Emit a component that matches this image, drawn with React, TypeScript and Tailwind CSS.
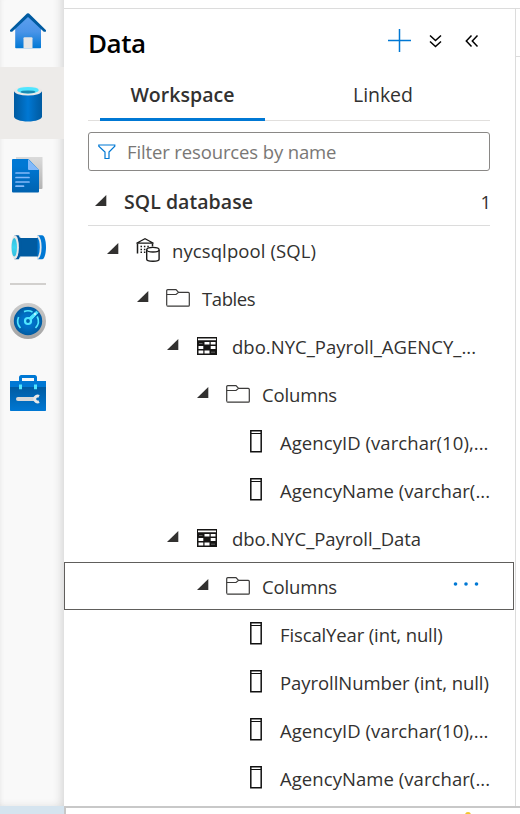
import React from "react";

const Caret = ({ className = "" }: { className?: string }) => (
  <svg viewBox="0 0 12 12" className={`h-3 w-3 shrink-0 ${className}`} aria-hidden="true">
    <path d="M11.3 0V11H0Z" fill="#323130" />
  </svg>
);

const HomeIcon = () => (
  <svg viewBox="0 0 36 36" width="36" height="36">
    <defs>
      <linearGradient id="home" x1="0" y1="0" x2="0" y2="1">
        <stop offset="0" stopColor="#5ea0ef" />
        <stop offset="0.5" stopColor="#4a94e8" />
        <stop offset="1" stopColor="#0078d4" />
      </linearGradient>
    </defs>
    <path d="M18 2 31 15V34.5a.8.8 0 0 1-.8.8H6a.8.8 0 0 1-.8-.8V15Z" fill="url(#home)" />
    <path d="M.7 18.7a1 1 0 0 1-.6-1.7L17 .6q1-.9 2 0L35.800 17a1 1 0 0 1-.6 1.700H33.800L18 4 2.200 18.700Z" fill="#005ba1" />
    <path d="M13.500 25.300a1 1 0 0 1 1-1h7a1 1 0 0 1 1 1v10h-9Z" fill="#e6e6e6" />
  </svg>
);

const DatabaseIcon = () => (
  <svg viewBox="0 0 28 36" width="28" height="36">
    <defs>
      <linearGradient id="dbody">
        <stop offset="0" stopColor="#005ba1" />
        <stop offset="0.2" stopColor="#0065b3" />
        <stop offset="0.5" stopColor="#0078d4" />
        <stop offset="0.8" stopColor="#0065b3" />
        <stop offset="1" stopColor="#005ba1" />
      </linearGradient>
    </defs>
    <path d="M0 5h28v25.500c0 2.700-6.300 5-14 5S0 33.200 0 30.500Z" fill="url(#dbody)" />
    <ellipse cx="14" cy="4.800" rx="14" ry="4.800" fill="#e8e8e8" />
    <ellipse cx="14" cy="4.200" rx="10.800" ry="3.300" fill="#50e6ff" />
    <ellipse cx="14" cy="5.900" rx="7.500" ry="1.500" fill="#198ab3" />
  </svg>
);

const DocumentIcon = () => (
  <svg viewBox="0 0 32 36" width="32" height="36">
    <defs>
      <linearGradient id="page" x1="0" y1="0" x2="0" y2="1">
        <stop offset="0" stopColor="#0078d4" />
        <stop offset="0.2" stopColor="#0078d4" />
        <stop offset="1" stopColor="#0062b0" />
      </linearGradient>
      <linearGradient id="sheet" x1="0" y1="0" x2="0" y2="1">
        <stop offset="0" stopColor="#dcdcdc" />
        <stop offset="1" stopColor="#b3b3b3" />
      </linearGradient>
    </defs>
    <rect x="4" y="-1" width="26.500" height="33" rx="1" fill="url(#sheet)" />
    <path d="M1 2h15.500L27 13v21.500a1 1 0 0 1-1 1H1a1 1 0 0 1-1-1V3a1 1 0 0 1 1-1Z" fill="url(#page)" />
    <path d="M16 2 27 13H17a1 1 0 0 1-1-1Z" fill="#83b9f9" />
    <path d="M4 16h13M4 20.500h13M4 25h13M4 29.200h7.500" stroke="#83b9f9" strokeWidth="1.700" strokeLinecap="round" />
  </svg>
);

const PipelineIcon = () => (
  <svg viewBox="0 0 36 25" width="36" height="25">
    <defs>
      <linearGradient id="pipeEnd" x1="0" y1="0" x2="0" y2="1">
        <stop offset="0" stopColor="#32bedd" />
        <stop offset="0.5" stopColor="#3fd5f0" />
        <stop offset="1" stopColor="#32bedd" />
      </linearGradient>
    </defs>
    <path d="M7 3h22v18.500H7Z" fill="#005ba1" />
    <path d="M4.500.3h4.300c1.200 1.200 2 2.900 2.600 5v14c-.6 2.200-1.400 3.900-2.600 5H4.500Z" fill="#005ba1" />
    <path d="M9 .3c1.700 2.500 2.700 6.500 2.700 12S10.700 21.800 9 24.300" fill="none" stroke="#dcecf8" strokeWidth=".8" strokeDasharray="3 18.500 4" />
    <path d="M27.500.3H32c2.700 0 4 6.500 4 12s-1.300 12-4 12h-4.500Z" fill="#0078d4" />
    <path d="M27.300.8C29.800 3 30.700 7.500 30.700 12.300s-.9 9.300-3.400 11.500" fill="none" stroke="#e8e8e8" strokeWidth="1.800" />
    <ellipse cx="5" cy="12.300" rx="3.900" ry="12" fill="#e8e8e8" />
    <ellipse cx="4.300" cy="12.300" rx="2.700" ry="9.300" fill="url(#pipeEnd)" />
  </svg>
);

const GaugeIcon = () => (
  <svg viewBox="0 0 36 36" width="36" height="36">
    <defs>
      <linearGradient id="rim" x1="0" y1="0" x2="0" y2="1">
        <stop offset="0" stopColor="#cccccc" />
        <stop offset="1" stopColor="#a2a2a2" />
      </linearGradient>
      <radialGradient id="dial">
        <stop offset="0" stopColor="#0078d4" />
        <stop offset="0.5" stopColor="#006fc4" />
        <stop offset="1" stopColor="#005ba1" />
      </radialGradient>
    </defs>
    <circle cx="18" cy="18" r="18" fill="url(#rim)" />
    <circle cx="18" cy="18" r="14.200" fill="url(#dial)" />
    <path d="M10.500 25A10.200 10.200 0 0 1 8.600 14M14 8.600A10.200 10.200 0 0 1 22.500 8.900M27.200 13.500A10.200 10.200 0 0 1 25.500 25" fill="none" stroke="#50e6ff" strokeWidth="1.700" />
    <path d="m19 15 7.500-6.800 1.500 1.500L21.200 17Z" fill="#50e6ff" stroke="#50e6ff" strokeLinejoin="round" />
    <circle cx="18" cy="18" r="3" fill="#0063af" stroke="#50e6ff" strokeWidth="2.200" />
    <circle cx="25" cy="11" r="1.200" fill="#b8f5ff" />
  </svg>
);

const ToolboxIcon = () => (
  <svg viewBox="0 0 36 36" width="36" height="36">
    <defs>
      <linearGradient id="box" x1="0" y1="0" x2="0" y2="1">
        <stop offset="0" stopColor="#005ba1" />
        <stop offset="1" stopColor="#0078d4" />
      </linearGradient>
    </defs>
    <path d="M10.500 7V2.200a.7.700 0 0 1 .7-.7h13.600a.7.700 0 0 1 .7.700V7" fill="none" stroke="#0078d4" strokeWidth="3" />
    <path d="M0 6h36v6H0Z" fill="#0078d4" />
    <path d="M0 12h36v23.300a.7.700 0 0 1-.7.700H.7a.7.700 0 0 1-.7-.7Z" fill="url(#box)" />
    <path d="M9 9.500h3v4.800H9ZM24 9.500h3v4.800h-3Z" fill="#50e6ff" />
    <path d="M8 24h16" stroke="#d8d8d8" strokeWidth="4" strokeLinecap="round" />
    <path d="M29 21.300A3 3 0 1 0 29 26.700" fill="none" stroke="#e8e8e8" strokeWidth="3" />
  </svg>
);

const PoolIcon = () => (
  <svg viewBox="0 0 24 24" width="24" height="24" fill="none" stroke="#1b1a19">
    <path d="M.5 5.200 9 .8l8.500 4.400Z" strokeWidth="1.200" />
    <path d="M1.500 5.500V15.500M16.500 5.500v3" strokeWidth="1.500" />
    <path d="M4.500 8.500h9M4.500 11.500h5M4.500 14.200h5" strokeWidth="1.600" strokeDasharray="1.500 1.900" />
    <path d="M10.700 12v9.200c0 1.300 2.800 2.100 6.200 2.100s6.200-.8 6.200-2.100V12" strokeWidth="1.400" fill="white" />
    <ellipse cx="16.900" cy="11.700" rx="6.200" ry="2.300" strokeWidth="1.400" fill="white" />
  </svg>
);

const FolderIcon = () => (
  <svg viewBox="0 0 24 18" width="24" height="18" fill="none" stroke="#3b3a39" strokeWidth="1.200">
    <path d="M.7 16V1.700a1 1 0 0 1 1-1H10l2.600 2.700H22.300a1 1 0 0 1 1 1V16.200a1 1 0 0 1-1 1H1.700a1 1 0 0 1-1-1" />
    <path d="M.7 5.500H10l2.600-2.100" />
  </svg>
);

const TableIcon = () => (
  <svg viewBox="0 0 20 18" width="20" height="18">
    <path d="M0 0h20v18H0Z" fill="#161514" />
    <path d="M1 1.500h18v1.700H1ZM7.500 5h5v2.500h-5ZM13.700 5H18.500v2.500h-4.800ZM1.500 9h4.800v3H1.500ZM13.700 9h4.800v3h-4.800ZM1.500 13.600h4.800v3H1.500ZM7.500 13.600h5v3h-5Z" fill="white" />
    <path d="M2 6.500h3.500M14 15.200h4" stroke="#777" strokeWidth=".8" />
  </svg>
);

const ColumnIcon = () => (
  <svg viewBox="0 0 12 23" width="12" height="23" fill="none" stroke="#111">
    <path d="M.8.8h10.400v21H.8Z" strokeWidth="1.500" />
    <path d="M1 3.500h10" strokeWidth="1" />
  </svg>
);

const iconOf = { pool: PoolIcon, folder: FolderIcon, table: TableIcon, column: ColumnIcon };

type Row = { label: string; kind: keyof typeof iconOf; pad: string; icon: string; text: string; selected?: boolean };

const rows: Row[] = [
  { label: "nycsqlpool (SQL)", kind: "pool", pad: "pl-[42px]", icon: "ml-[17px] w-9", text: "tracking-[0.1px]" },
  { label: "Tables", kind: "folder", pad: "pl-[72px]", icon: "ml-[17px] w-9", text: "tracking-[-0.4px]" },
  { label: "dbo.NYC_Payroll_AGENCY_...", kind: "table", pad: "pl-[102px]", icon: "ml-[18px] w-[35px]", text: "tracking-[0.02px]" },
  { label: "Columns", kind: "folder", pad: "pl-[132px]", icon: "ml-[17px] w-9", text: "tracking-[-0.15px]" },
  { label: "AgencyID (varchar(10),...", kind: "column", pad: "pl-[185px]", icon: "w-[30px]", text: "tracking-[0.06px]" },
  { label: "AgencyName (varchar(...", kind: "column", pad: "pl-[185px]", icon: "w-[30px]", text: "tracking-[0.06px]" },
  { label: "dbo.NYC_Payroll_Data", kind: "table", pad: "pl-[102px]", icon: "ml-[18px] w-[35px]", text: "tracking-[-0.05px]" },
  { label: "Columns", kind: "folder", pad: "pl-[132px]", icon: "ml-[17px] w-9", text: "tracking-[-0.15px]", selected: true },
  { label: "FiscalYear (int, null)", kind: "column", pad: "pl-[185px]", icon: "w-[30px]", text: "tracking-[-0.13px]" },
  { label: "PayrollNumber (int, null)", kind: "column", pad: "pl-[185px]", icon: "w-[30px]", text: "tracking-[-0.06px]" },
  { label: "AgencyID (varchar(10),...", kind: "column", pad: "pl-[185px]", icon: "w-[30px]", text: "tracking-[0.06px]" },
  { label: "AgencyName (varchar(...", kind: "column", pad: "pl-[185px]", icon: "w-[30px]", text: "tracking-[0.06px]" },
];

const TreeRow = ({ row }: { row: Row }) => {
  const Icon = iconOf[row.kind];
  return (
    <div className={`flex h-12 w-[450px] shrink-0 items-center border ${row.selected ? "border-[#605e5c]" : "border-transparent"} ${row.pad}`}>
      {row.kind !== "column" && <Caret className="-mt-0.5" />}
      <span className={`flex shrink-0 ${row.icon} ${row.kind === "column" ? "-mt-0.5" : ""}`}><Icon /></span>
      <span className={`pt-0.5 whitespace-nowrap ${row.text}`}>{row.label}</span>
      {row.selected && (
        <svg viewBox="0 0 26 4" width="26" height="4" className="mr-[34px] -mt-1 ml-auto" fill="#0078d4">
          <circle cx="2.500" cy="2" r="1.800" /><circle cx="13" cy="2" r="1.800" /><circle cx="23.500" cy="2" r="1.800" />
        </svg>
      )}
    </div>
  );
};

export default function App() {
  return (
    <div className="flex h-[814px] w-[520px] flex-col overflow-hidden bg-white font-['Open_Sans','Noto_Sans',sans-serif] text-[18.500px] leading-6 text-[#323130]">
      <div className="flex h-[806px] shrink-0">
        <nav className="flex w-16 shrink-0 flex-col bg-[#f9f9f9] shadow-[inset_-10px_-6px_10px_-8px_#d2d2d2,inset_4px_0_5px_-4px_#e4e4e4]">
          <div className="h-[67px] pt-[13px] pl-2.5"><HomeIcon /></div>
          <div className="h-[72px] bg-[#edebe9] pt-[19px] pl-3.5"><DatabaseIcon /></div>
          <div className="h-[72px] pt-[18px] pl-3"><DocumentIcon /></div>
          <div className="h-[72px] pt-6 pl-2.5"><PipelineIcon /></div>
          <div className="ml-2.5 h-0.5 w-9 bg-[#d2d0ce]" />
          <div className="h-[72px] pt-[18px] pl-2.5"><GaugeIcon /></div>
          <div className="h-[72px] pt-[18px] pl-2.5"><ToolboxIcon /></div>
        </nav>
        <div className="flex grow flex-col pt-2">
          <div className="flex grow border-t border-[#dcdcdc]">
            <main className="flex w-[452px] shrink-0 flex-col border-r border-[#dcdcdc]">
              <header className="flex h-[66px] items-center pl-6">
                <h1 className="w-[300px] pt-0.5 text-[26px] font-semibold leading-8 tracking-[-0.5px] text-black">Data</h1>
                <svg viewBox="0 0 23 23" width="23" height="23" className="mb-1"><path d="M11.500 0v23M0 11.500h23" stroke="#0078d4" strokeWidth="1.500" /></svg>
                <svg viewBox="0 0 14 14" width="14" height="14" className="ml-[18px] mb-0.5" fill="none" stroke="black" strokeWidth="1.500"><path d="m1 1.500 5.500 5L12 1.500M1 7.500l5.500 5 5.500-5" /></svg>
                <svg viewBox="0 0 14 14" width="14" height="14" className="ml-[22px] mb-0.5" fill="none" stroke="black" strokeWidth="1.500"><path d="M6.500 1.500 1.300 7l5.200 5.500M12.500 1.500 7.300 7l5.200 5.500" /></svg>
              </header>
              <div className="ml-6 flex h-[46px] w-[402px] items-end border-b border-[#e1dfdd]">
                <div className="-mb-px ml-3 flex h-[46px] w-[165px] justify-center border-b-[3px] border-[#0078d4] pt-2 text-[19.500px] font-semibold tracking-[0.05px]">Workspace</div>
                <div className="flex h-[45px] w-[225px] pt-2 pl-[88px] text-[19.500px] tracking-[-0.05px]">Linked</div>
              </div>
              <div className="mt-[11px] ml-6 flex h-[39px] w-[402px] items-center rounded-[3px] border border-[#8a8886] pl-[9px] text-[#797775]">
                <svg viewBox="0 0 18 16" width="18" height="16" fill="none" stroke="#0078d4" strokeWidth="1.200" className="mr-[11px]"><path d="M.8 1h16v1.200L11 8v6.500H7V8L.8 2.200Z" /></svg>
                <span className="tracking-[-0.13px]">Filter resources by name</span>
              </div>
              <div className="mt-[7px] ml-6 flex h-12 w-[402px] items-center border-b border-[#dcdcdc] pl-[7px]">
                <Caret className="-mt-0.5" />
                <span className="ml-[17px] grow text-[19.500px] font-semibold tracking-[0.05px]">SQL database</span>
                <span className="-mr-px">1</span>
              </div>
              {rows.map((row, i) => <TreeRow row={row} key={i} />)}
            </main>
            <div className="h-12 w-1 border-b border-[#dcdcdc]" />
          </div>
        </div>
      </div>
      <footer className="flex h-2 shrink-0">
        <div className="w-16 bg-[#d5e4ef]" />
        <div className="flex grow justify-end border-t-2 border-l-2 border-[#c8c8c8] pr-[49px]">
          <svg viewBox="0 0 6 6" width="6" height="6"><circle cx="3" cy="7" r="3" fill="#f3c52d" /></svg>
        </div>
      </footer>
    </div>
  );
}
